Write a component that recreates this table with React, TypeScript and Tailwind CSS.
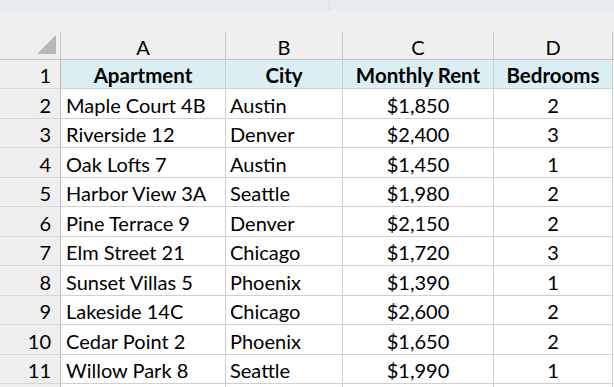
const rows = [
  { apt: "Maple Court 4B", city: "Austin", rent: "$1,850", beds: "2" },
  { apt: "Riverside 12", city: "Denver", rent: "$2,400", beds: "3" },
  { apt: "Oak Lofts 7", city: "Austin", rent: "$1,450", beds: "1" },
  { apt: "Harbor View 3A", city: "Seattle", rent: "$1,980", beds: "2" },
  { apt: "Pine Terrace 9", city: "Denver", rent: "$2,150", beds: "2" },
  { apt: "Elm Street 21", city: "Chicago", rent: "$1,720", beds: "3" },
  { apt: "Sunset Villas 5", city: "Phoenix", rent: "$1,390", beds: "1" },
  { apt: "Lakeside 14C", city: "Chicago", rent: "$2,600", beds: "2" },
  { apt: "Cedar Point 2", city: "Phoenix", rent: "$1,650", beds: "2" },
  { apt: "Willow Park 8", city: "Seattle", rent: "$1,990", beds: "1" },
];

// alternate 30/29 so the row lines follow the ~29.5px pitch of the sheet
const heights = ["h-[30px]", "h-[29px]", "h-[30px]", "h-[29px]", "h-[30px]", "h-[29px]", "h-[30px]", "h-[29px]", "h-[30px]", "h-[29px]"];

const grid = "grid grid-cols-[61px_165px_117px_151px_119px]";
const rowHead = "bg-[#efefef] border-r border-b border-r-[#bdbdbd] border-b-[#d6d6d6] flex items-center justify-end pr-[9px] pt-[2px]";
const cell = "border-r border-b border-[#d0d0d0] flex items-center pt-[2px]";

function ColumnHeaders() {
  return (
    <div className={`${grid} h-[28px] bg-[#efefef] border-b border-[#c2c2c2]`}>
      <div className="border-r border-[#c6c6c6] flex items-end justify-end pr-[4px] pb-[5px]">
        <svg width="19" height="19" viewBox="0 0 19 19">
          <polygon points="19,0 19,19 0,19" fill="#b7b7b7" />
        </svg>
      </div>
      {["A", "B", "C", "D"].map((l) => (
        <div key={l} className="border-r border-[#c6c6c6] flex items-center justify-center pt-[2px]">
          {l}
        </div>
      ))}
    </div>
  );
}

function HeaderRow() {
  return (
    <div className={`${grid} h-[29px]`}>
      <div className={rowHead}>1</div>
      {["Apartment", "City", "Monthly Rent", "Bedrooms"].map((h) => (
        <div key={h} className={`${cell} bg-[#dbeef4] justify-center font-bold text-[20.5px]`}>
          {h}
        </div>
      ))}
    </div>
  );
}

export default function App() {
  return (
    <div
      className="w-[614px] h-[387px] overflow-hidden bg-white text-black text-[20px] leading-none"
      style={{ fontFamily: "Lato, 'Liberation Sans', sans-serif" }}
    >
      <div className="h-[11px] bg-[#e7ecf1] flex">
        <div className="w-[330px] border-r border-dashed border-[#d5dade]" />
        <div className="flex-1" />
      </div>
      <div className="h-[21px] bg-[#efefef]" />
      <ColumnHeaders />
      <HeaderRow />
      {rows.map((r, i) => (
        <div key={r.apt} className={`${grid} ${heights[i]}`}>
          <div className={rowHead}>{i + 2}</div>
          <div className={`${cell} pl-[5px]`}>{r.apt}</div>
          <div className={`${cell} pl-[4px]`}>{r.city}</div>
          <div className={`${cell} justify-center`}>{r.rent}</div>
          <div className={`${cell} justify-center`}>{r.beds}</div>
        </div>
      ))}
      <div className={`${grid} h-[30px]`}>
        <div className={rowHead}></div>
        <div className={cell}></div>
        <div className={cell}></div>
        <div className={cell}></div>
        <div className={cell}></div>
      </div>
    </div>
  );
}
